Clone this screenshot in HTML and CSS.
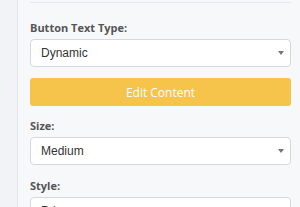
FILE: index.html
```html
<!DOCTYPE html>
<html lang="en">
<head>
<meta charset="utf-8"/>
<meta content="width=device-width, initial-scale=1.0" name="viewport"/>
<title>Button Settings</title>
<link rel="stylesheet" href="styles.css">
</head>
<body>
<div class="layout">
<div class="sidebar"></div>
<div class="panel">
<div class="divider"></div>
<div class="field">
<label class="field-label">Button Text Type:</label>
<div class="select-box"><span>Dynamic</span><span class="caret"></span></div>
</div>
<button class="edit-btn">Edit Content</button>
<div class="field">
<label class="field-label">Size:</label>
<div class="select-box"><span>Medium</span><span class="caret"></span></div>
</div>
<div class="field">
<label class="field-label">Style:</label>
<div class="select-box"><span>Primary</span><span class="caret"></span></div>
</div>
</div>
</div>
</body>
</html>
```

FILE: styles.css
```css
body {
    margin: 0;
    padding: 0;
    background-color: #f7f8fa;
    font-family: 'Open Sans', sans-serif;
    overflow: hidden;
}
.layout {
    display: flex;
    height: 207px;
    overflow: hidden;
}
.sidebar {
    width: 17px;
    flex-shrink: 0;
    background-color: #f2f3f6;
    border-right: 1px solid #e4e6ea;
}
.panel {
    flex: 1;
    padding: 0 9px 0 12px;
}
.divider {
    height: 1px;
    margin-top: 2px;
    background-color: #e6e8eb;
}
.field {
    margin-top: 17px;
}
.field-label {
    display: block;
    font-size: 11px;
    font-weight: bold;
    color: #555;
    line-height: 16px;
    margin-bottom: 3px;
}
.select-box {
    display: flex;
    align-items: center;
    justify-content: space-between;
    height: 26px;
    padding: 0 6px 0 10px;
    background: #fff;
    border: 1px solid #d6d8db;
    border-radius: 4px;
    font-family: 'Liberation Sans', Arial, sans-serif;
    font-size: 12px;
    color: #333;
}
.caret {
    width: 0;
    height: 0;
    border-left: 3px solid transparent;
    border-right: 3px solid transparent;
    border-top: 4px solid #777;
}
.edit-btn {
    display: block;
    width: 100%;
    height: 28px;
    margin-top: 11px;
    background-color: #f6c34b;
    border: none;
    border-radius: 3px;
    color: #fff;
    font-family: 'Open Sans', sans-serif;
    font-size: 12px;
}
.edit-btn + .field {
    margin-top: 12px;
}
.field + .field {
    margin-top: 13px;
}
```
